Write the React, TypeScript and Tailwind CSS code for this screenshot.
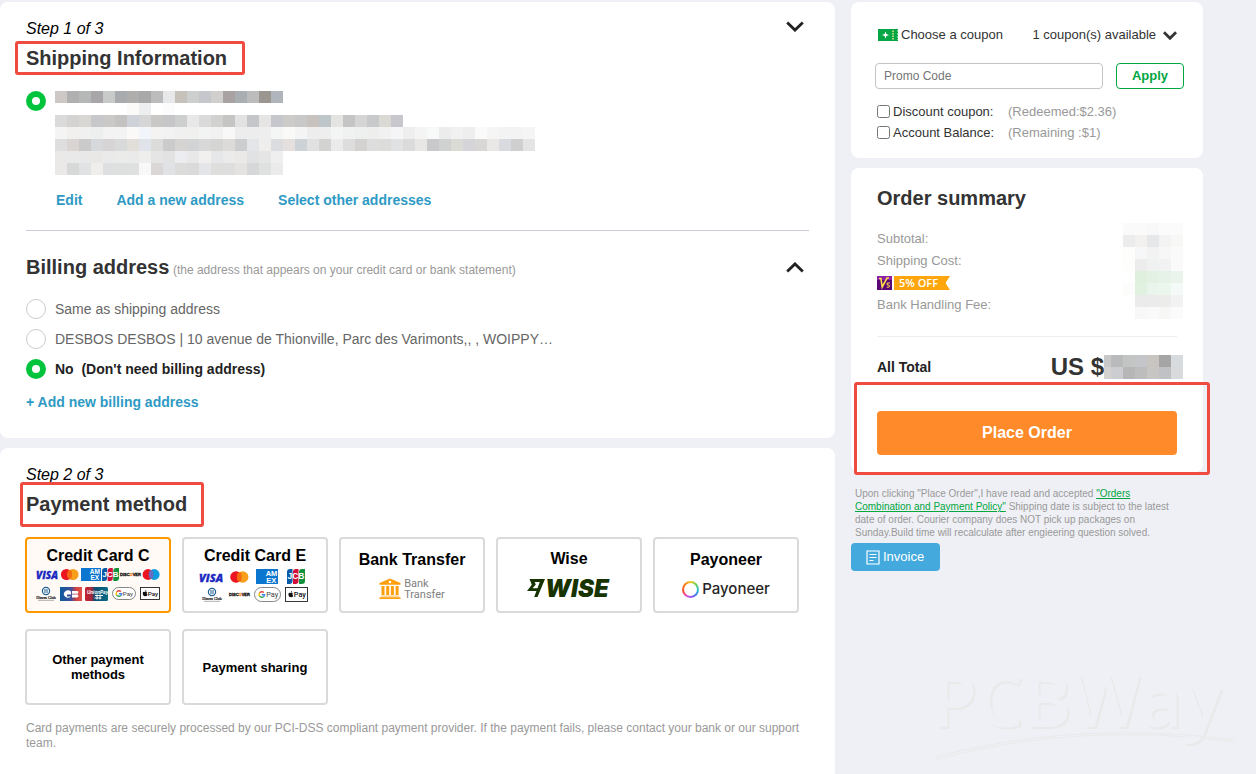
import React, { useState } from 'react';

const ADDRESS_CELLS = [
  'cdc8c6 b0b0b0 b5b8b7 a8a6a9 c7cac9 a8abae afaeac a8a8a8 bcbcbc e6e8ea c6c2bb cdcfce c6c7cd d0cfce a8a3a2 a8aeb2 bcbcbc 9c9691 b0b4bb',
  '- - - - - - fcfaf8 eceef0 - fcfcfc',
  'dadada d5d3d1 d8d7d4 c6c8cb cac9c8 c5c3c1 cfd2d9 d6d6d6 c9c8c7 c6c6c9 cdcfce e8e8e8 dadada d1d1d0 c5c5c3 e2e2e2 c4c6c9 e7e5e4 c6c7cd cccbca c8c8c8 c8c2be bfc6ca e4e4e2 c5c5c5 d5d5d5 c8c9ca dad9d4 c7c7cd',
  'f4f4f4 f2f0ee f0f0f0 ecefee f3f3f3 f3f3f3 fbf9f7 f2f5f9 f4f3f2 f2f2f2 f0f0f0 f0f0ef f2f4f3 f1f1f1 f8f8f8 ededed ededed eeeeee f4f6f5 f9f9f7 f4f4f4 ededed eeeeee f3f5f4 f0f1f1 edf0ef eeeeec f1f1f1 f5f5f7 eeeeee f4f4f4 f8faf9 ececec f1f1f1 eeeeee fafafa f5f5f5 f3f3f3 f3f3f3 f5f5f5',
  'dedede dad5d2 cacaca d5d9dc d6d4d5 d8d9db e2deda e0e4ea dcdcda cbcbcb d6d4d2 d2d3d5 d8d8d8 d5d5d4 dcdbd9 cccdcf e4e5e8 efeeec dbdcdf e5e0dd cdd2d6 e1e1e1 d3d3d1 ebebeb dddddd d3d2d0 dddddd dcdcda e1e2e4 dbdbdb e8e7e6 c9c9cc d0d2d1 dbdbd5 d5d5d9 d8d7d5 e9e8e6 d9dae0 cfcfcf e4e4e4',
  'eae9e8 e9e9e9 e8e8e8 eae8e6 eaeaea ebebea eaeaea eeeeec e5e5e5 e2e2e2 ebedf0 e8e8e8 f1f0ee e6e7e9 ebebeb eae9e7 e1e2e4 e5e5e6 efefef',
  'eae9e7 d7d9d8 e0e2e3 efeeeb dedfe1 dee0e0 dfe1e1 f8f8f8 dbd7d6 e1e2e6 dcdcda dadada e4e5e8 dededd dededf e4e3e1 d6d7d9 dfe1e0 ebebeb',
];

const AMOUNT_CELLS = [
  'fafafa fafafa f8f8f9 fbfbfb fbfbfb',
  'ececec f2f1ef e6e7e9 f3f3f3 f7f7f5',
  'fdfdfb f6f7f9 f2f2f3 f7f7f7 fafafa',
  'fdfdfb ececed f0f1f1 f2f2f2 fafafa',
  '- dff0de e2f1e3 e6f2e7 eaf4ec',
  'fcfcfa e1f1e0 e8f4ec ebf6ed f4faf7',
  '- ebebec ebebec ececeb f2f2f3',
  '- f8f8f8 fafafa f7f7f5 fbfbfb',
];

const TOTAL_CELLS = [
  'c8c8c8 b9babc c3c5c4 c3c5c8 c8c4c0 a5a5a5 d7dbde',
  'd3d2d1 cccdd0 b6b6b6 bdbdbd c7c6c4 c0c1c4 d9dadc',
];

interface MosaicProps {
  rows: string[];
  columns: number;
}

const Mosaic: React.FC<MosaicProps> = ({ rows, columns }) => (
  <svg
    width={columns * 12}
    height={rows.length * 12}
    shapeRendering="crispEdges"
    className="shrink-0"
    aria-hidden="true"
  >
    {rows.map((row, y) =>
      row.split(' ').map((color, x) =>
        color === '-' ? null : (
          <rect key={`${x}-${y}`} x={x * 12} y={y * 12} width="12" height="12" fill={`#${color}`} />
        )
      )
    )}
  </svg>
);

const Chevron: React.FC<{ up?: boolean; small?: boolean }> = ({ up, small }) => (
  <svg
    width={small ? 14 : 18}
    height={small ? 9 : 11}
    viewBox="0 0 18 11"
    fill="none"
    stroke={small ? '#333' : '#222'}
    strokeWidth={small ? 3.6 : 2.8}
    aria-hidden="true"
  >
    <path d={up ? 'M1.2 9.6 9 1.9l7.8 7.7' : 'M1.2 1.4 9 9.1l7.8-7.7'} />
  </svg>
);

/* Payment brand marks */

const Visa = ({ x, y, size }: { x: number; y: number; size: number }) => (
  <text
    x={x}
    y={y}
    fontSize={size}
    fontFamily="Open Sans, sans-serif"
    fontWeight="800"
    fontStyle="italic"
    fill="#1a28c0"
    stroke="#1a28c0"
    strokeWidth="0.3"
  >
    VISA
  </text>
);

const Circles = ({ x, y, r, right, middle }: { x: number; y: number; r: number; right: string; middle: string }) => (
  <g>
    <circle cx={x} cy={y} r={r} fill="#eb1420" />
    <circle cx={x + r * 1.15} cy={y} r={r} fill={right} />
    <ellipse cx={x + r * 0.575} cy={y} rx={r * 0.42} ry={r * 0.8} fill={middle} />
  </g>
);

const Amex = ({ x, y, w, h }: { x: number; y: number; w: number; h: number }) => (
  <g fontFamily="Liberation Sans, sans-serif" fontWeight="700" fontSize={h / 2} fill="#fff">
    <rect x={x} y={y} width={w} height={h} fill="#0b76d0" />
    <text x={x + w * 0.44} y={y + h * 0.47}>AM</text>
    <text x={x + w * 0.47} y={y + h * 0.9}>EX</text>
  </g>
);

const Jcb = ({ x, y, w, h }: { x: number; y: number; w: number; h: number }) => (
  <g>
    <path d={`M${x} ${y + 3}q0-3 3-3h${w / 3 - 3.5}v${h - 3}q0 3-3 3h-${w / 3 - 3.5}z`} fill="#0a5aa8" />
    <path d={`M${x + w / 3} ${y + 3}q0-3 3-3h${w / 3 - 3.5}v${h - 3}q0 3-3 3h-${w / 3 - 3.5}z`} fill="#d0103a" />
    <path d={`M${x + (w * 2) / 3} ${y + 3}q0-3 3-3h${w / 3 - 3}v${h - 3}q0 3-3 3h-${w / 3 - 3}z`} fill="#12903c" />
    <text
      x={x + w / 2}
      y={y + h * 0.68}
      textAnchor="middle"
      fontFamily="Liberation Sans, sans-serif"
      fontWeight="700"
      fontSize={w * 0.47}
      fill="#fff"
    >
      JCB
    </text>
  </g>
);

const Discover = ({ x, y }: { x: number; y: number }) => (
  <text x={x} y={y} fontFamily="Liberation Sans, sans-serif" fontWeight="700" fontSize="4" fill="#111" stroke="#111" strokeWidth="0.3">
    DISC
    <tspan fill="#f47a20" stroke="#f47a20">O</tspan>
    VER
  </text>
);

const Diners = ({ x, y }: { x: number; y: number }) => (
  <g>
    <circle cx={x + 9} cy={y + 4} r="3.6" fill="#fff" stroke="#1b5f92" strokeWidth="1.2" />
    <path d={`M${x + 8} ${y + 2}v4M${x + 10} ${y + 2}v4`} stroke="#1b5f92" strokeWidth="1" />
    <text x={x + 9} y={y + 12} textAnchor="middle" fontFamily="Liberation Serif, serif" fontSize="4" fill="#111" stroke="#111" strokeWidth="0.2">
      Diners Club
    </text>
    <path d={`M${x + 1} ${y + 13.3}h16`} stroke="#777" strokeWidth="0.6" />
  </g>
);

const GPay = ({ x, y, w, h }: { x: number; y: number; w: number; h: number }) => {
  const cx = x + w * 0.28;
  const cy = y + h / 2;
  return (
    <g fill="none" strokeWidth="1.4">
      <rect x={x} y={y} width={w} height={h} rx={h / 2} fill="#fff" stroke="#777" strokeWidth="0.9" />
      <path d={`M${cx + 2} ${cy - 2}a2.8 2.8 0 0 0-4.2.4`} stroke="#ea4335" />
      <path d={`M${cx - 2.2} ${cy - 1.6}a2.8 2.8 0 0 0 0 3.2`} stroke="#fbbc04" />
      <path d={`M${cx - 2.2} ${cy + 1.6}a2.8 2.8 0 0 0 4.2.4`} stroke="#34a853" />
      <path d={`M${cx} ${cy + 0.2}h2.8a2.8 2.8 0 0 1-.8 1.8`} stroke="#4285f4" />
      <text x={x + w * 0.45} y={cy + h * 0.18} fontFamily="Roboto, sans-serif" fontSize={h * 0.52} fill="#444" stroke="none">
        Pay
      </text>
    </g>
  );
};

const ApplePay = ({ x, y, w, h }: { x: number; y: number; w: number; h: number }) => {
  const ax = x + w * 0.24;
  const cy = y + h / 2;
  return (
    <g>
      <rect x={x} y={y} width={w} height={h} fill="#fff" stroke="#222" strokeWidth="0.9" />
      <path
        d={`M${ax + 2} ${cy - 1.4}q-1-.9-2-.2q-2-.7-2.4 1.2q0 2.2 1.5 3.2l1-.3l1 .3q.9-.4 1.3-1.6q-1.5-1.2-.4-2.6zM${ax} ${cy - 2}q0-1.4 1.3-1.8q0 1.4-1.3 1.8z`}
        fill="#111"
      />
      <text x={x + w * 0.38} y={cy + h * 0.17} fontFamily="Roboto, sans-serif" fontWeight="500" fontSize={h * 0.52} fill="#111">
        Pay
      </text>
    </g>
  );
};

const CardLogosC = () => (
  <svg width="128" height="38" viewBox="0 0 128 38" aria-hidden="true">
    <defs>
      <linearGradient id="cb" x1="0" x2="1">
        <stop offset="0" stopColor="#0a5a9c" />
        <stop offset="0.5" stopColor="#3d4f9a" />
        <stop offset="0.75" stopColor="#d8403c" />
        <stop offset="1" stopColor="#e0564e" />
      </linearGradient>
      <linearGradient id="up" x1="0" x2="1">
        <stop offset="0" stopColor="#c82430" />
        <stop offset="0.3" stopColor="#a02840" />
        <stop offset="0.42" stopColor="#0d4d72" />
        <stop offset="1" stopColor="#0a6c86" />
      </linearGradient>
    </defs>
    <Visa x={2} y={12.5} size={10} />
    <Circles x={32.5} y={8.5} r={5.6} right="#f79e1b" middle="#f56a10" />
    <Amex x={47} y={2} w={20} h={13} />
    <Jcb x={68} y={2} w={17} h={13} />
    <Discover x={86} y={10.2} />
    <Circles x={114} y={8.5} r={5.4} right="#0f9be0" middle="#6c6bbd" />
    <Diners x={3} y={21} />
    <rect x="26" y="21" width="22" height="14" fill="url(#cb)" />
    <path d="M37 25.5a4.2 3.6 0 1 0 0 5h-4v-2h4zM38 25h5a1.4 1.4 0 0 1 0 2.8h-5zM38 28.6h5a1.4 1.4 0 0 1 0 2.8h-5z" fill="#fff" />
    <rect x="51" y="21" width="23" height="14" rx="1.5" fill="url(#up)" />
    <text x="53" y="27.5" fontFamily="Liberation Sans, sans-serif" fontStyle="italic" fontWeight="700" fontSize="4.6" fill="#fff">
      UnionPay
    </text>
    <path d="M61 29.5h8M60.5 32h7M63 28.5v5M66 28.5v5" stroke="#fff" strokeWidth="1" />
    <GPay x={78.5} y={21.5} w={23} h={12} />
    <ApplePay x={106.5} y={21.5} w={19} h={12} />
  </svg>
);

const CardLogosE = () => (
  <svg width="128" height="38" viewBox="0 0 128 38" aria-hidden="true">
    <Visa x={8} y={15.5} size={11} />
    <Circles x={45} y={11} r={5.8} right="#f79e1b" middle="#f56a10" />
    <Amex x={65} y={3} w={22} h={15} />
    <Jcb x={96} y={3} w={18} h={15} />
    <Diners x={12} y={22} />
    <Discover x={38} y={30} />
    <GPay x={63.5} y={21.5} w={26} h={14} />
    <ApplePay x={94.5} y={21.5} w={22} h={14} />
  </svg>
);

const BankLogo = () => (
  <span className="flex items-center gap-[3px]">
    <svg width="22" height="22" viewBox="0 0 22 22" fill="#ff9f0e" aria-hidden="true">
      <path d="M11 0.5 21.500 5v1.8H0.500V5z" />
      <circle cx="11" cy="4" r="1.3" fill="#fff" />
      <path d="M2.500 8h3v9h-3zM7.200 8h3v9h-3zM11.900 8h3v9h-3zM16.600 8h3v9h-3z" />
      <path d="M2 17.500h18v1.200H2z" opacity="0.6" />
      <path d="M0.500 19.200h21V21h-21z" />
    </svg>
    <span className="text-left font-[Roboto,sans-serif] text-[11px] leading-[11px] text-[#808080]">
      <span className="block">Bank</span>
      <span className="block">Transfer</span>
    </span>
  </span>
);

const WiseLogo = () => (
  <svg width="84" height="24" viewBox="0 0 84 24" fill="#163300" className="overflow-visible" aria-hidden="true">
    <path d="M2.500 2H18L10.500 20H7.200L12.800 5H7.600L8.800 7.600 5.500 11.200H10.500L9.400 14H0L4.800 7.800z" />
    <text x="18" y="20" fontFamily="Inter, sans-serif" fontWeight="900" fontStyle="italic" fontSize="24">
      WISE
    </text>
  </svg>
);

const PayoneerLogo = () => (
  <span className="flex items-center gap-[3px]">
    <span className="size-[17px] rounded-full bg-[conic-gradient(#f5c81e,#5fd35a,#25b8f0,#6b5cf0,#d94fe0,#ff4a3a,#ff7a1a,#f5c81e)] p-[2px]">
      <span className="block size-full rounded-full bg-white" />
    </span>
    <span className="font-[Inter,sans-serif] text-[15px] leading-[22px] font-medium text-[#252525]">Payoneer</span>
  </span>
);

interface PaymentOption {
  id: string;
  title: string;
  logo?: React.ReactNode;
  gap?: boolean;
}

const OPTIONS: PaymentOption[] = [
  { id: 'card-c', title: 'Credit Card C', logo: <CardLogosC /> },
  { id: 'card-e', title: 'Credit Card E', logo: <CardLogosE /> },
  { id: 'bank', title: 'Bank Transfer', logo: <BankLogo />, gap: true },
  { id: 'wise', title: 'Wise', logo: <WiseLogo />, gap: true },
  { id: 'payoneer', title: 'Payoneer', logo: <PayoneerLogo />, gap: true },
  { id: 'other', title: 'Other payment methods' },
  { id: 'sharing', title: 'Payment sharing' },
];

const radioClass =
  'size-5 shrink-0 appearance-none rounded-full border border-[#ccc] bg-white checked:border-[6px] checked:border-[#00c43c]';
const linkClass = 'text-sm leading-5 font-bold text-[#2e9ac4]';
const markClass = 'pointer-events-none absolute rounded-[3px] border-[3px] border-[#f04b41]';

const ShippingCard = () => {
  const [billing, setBilling] = useState('none');
  const choices = [
    { id: 'same', label: 'Same as shipping address' },
    { id: 'desbos', label: 'DESBOS DESBOS | 10 avenue de Thionville, Parc des Varimonts,, , WOIPPY…' },
    { id: 'none', label: "No\u00a0 (Don't need billing address)" },
  ];

  return (
    <section className="rounded-lg bg-white px-[26px] pt-[17px] pb-[26px]">
      <div className="flex items-start justify-between">
        <p className="text-base leading-5 text-black italic">Step 1 of 3</p>
        <button type="button" aria-label="Collapse shipping information" className="mt-0.5 mr-[5px]">
          <Chevron />
        </button>
      </div>
      <h2 className="relative mt-[7px] w-fit text-xl leading-6 font-bold">
        Shipping Information
        <span className={`${markClass} -top-[5px] -right-[18px] -bottom-[5px] -left-[11px]`} />
      </h2>
      <div className="mt-[21px] flex gap-[9px]">
        <input type="radio" name="shipping" aria-label="Saved address" defaultChecked className={radioClass} />
        <Mosaic rows={ADDRESS_CELLS} columns={40} />
      </div>
      <div className="mt-[15px] flex gap-[34px] pl-[30px]">
        <a href="#edit" className={linkClass}>Edit</a>
        <a href="#add-address" className={linkClass}>Add a new address</a>
        <a href="#addresses" className={linkClass}>Select other addresses</a>
      </div>
      <hr className="mt-5 border-[#c9ced8]" />

      <div className="mt-6 flex items-center justify-between">
        <h2 className="text-xl leading-6 font-bold">
          Billing address{' '}
          <small className="-ml-0.5 text-xs font-normal text-[#999]">
            (the address that appears on your credit card or bank statement)
          </small>
        </h2>
        <button type="button" aria-label="Collapse billing address" className="mr-[5px]">
          <Chevron up />
        </button>
      </div>
      <div className="mt-5 flex flex-col gap-2.5">
        {choices.map(choice => (
          <label key={choice.id} className="flex items-center gap-[9px] text-sm leading-5 text-[#666] has-checked:font-bold has-checked:text-[#222]">
            <input
              type="radio"
              name="billing"
              checked={billing === choice.id}
              onChange={() => setBilling(choice.id)}
              className={radioClass}
            />
            {choice.label}
          </label>
        ))}
      </div>
      <div className="mt-[13px] flex">
        <a href="#add-billing" className={linkClass}>+ Add new billing address</a>
      </div>
    </section>
  );
};

const PaymentCard = () => {
  const [selected, setSelected] = useState('card-c');

  return (
    <section className="mt-2.5 flex-1 rounded-t-lg bg-white px-[26px] pt-[17px] pb-6">
      <p className="text-base leading-5 text-black italic">Step 2 of 3</p>
      <h2 className="relative mt-[7px] w-fit text-xl leading-6 font-bold">
        Payment method
        <span className={`${markClass} -top-[10px] -right-[17px] -bottom-[11px] -left-[6px]`} />
      </h2>
      <div className="mt-[21px] -ml-px flex flex-wrap gap-x-[11px] gap-y-4">
        {OPTIONS.map(option => (
          <button
            key={option.id}
            type="button"
            aria-pressed={selected === option.id}
            onClick={() => setSelected(option.id)}
            className={`flex h-[76px] w-[146px] flex-col items-center justify-center rounded border-2 ${
              selected === option.id ? 'border-[#ff9900] bg-[#fffaf5]' : 'border-[#dadada] bg-white'
            } ${option.gap ? 'gap-2' : ''}`}
          >
            <span className={`font-bold text-black ${option.logo ? 'text-base leading-5' : 'px-4 text-[13px] leading-[15px]'}`}>
              {option.title}
            </span>
            {option.logo}
          </button>
        ))}
      </div>
      <p className="mt-4 text-xs leading-[15px] text-[#999]">
        Card payments are securely processed by our PCI-DSS compliant payment provider. If the payment fails, please contact your
        bank or our support team.
      </p>
    </section>
  );
};

const CouponCard = () => (
  <section className="rounded-lg bg-white pt-[23px] pr-[19px] pb-[15px] pl-6 text-[13px]">
    <div className="flex items-center pr-[7px] pl-[3px] leading-5">
      <svg width="20" height="12" viewBox="0 0 20 12" className="mr-[3px]" aria-hidden="true">
        <path d="M0 0h20v12H0z" fill="#06a647" />
        <path d="M7.500 2.500 8.400 5.100 11 6 8.400 6.900 7.500 9.500 6.600 6.900 4 6l2.600-.9z" fill="#fff" />
        <path d="M15 1.500v9.500" stroke="#ffe98a" strokeWidth="1.400" strokeDasharray="1.500 1" />
        <path d="M19.500 1v10" stroke="#7fd39f" strokeWidth="1" strokeDasharray="2 1" />
      </svg>
      <span>Choose a coupon</span>
      <button type="button" className="ml-auto flex items-center gap-[7px]">
        <span>1 coupon(s) available</span>
        <Chevron small />
      </button>
    </div>
    <div className="mt-[18px] flex gap-[13px]">
      <input
        type="text"
        aria-label="Promo Code"
        placeholder="Promo Code"
        className="h-[26px] min-w-0 flex-1 rounded border border-[#c4c4c4] px-2 text-xs placeholder:text-[#757575]"
      />
      <button type="button" className="h-[26px] w-[68px] rounded border border-[#00a63f] font-bold text-[#00a63f]">
        Apply
      </button>
    </div>
    <div className="mt-3 grid grid-cols-[131px_1fr] pl-0.5 leading-[21px]">
      <label className="flex items-center gap-[3px]">
        <input type="checkbox" className="size-[13px]" />
        Discount coupon:
      </label>
      <span className="text-[#999]">(Redeemed:$2.36)</span>
      <label className="flex items-center gap-[3px]">
        <input type="checkbox" className="size-[13px]" />
        Account Balance:
      </label>
      <span className="text-[#999]">(Remaining :$1)</span>
    </div>
  </section>
);

const SummaryCard = () => (
  <section className="mt-2.5 rounded-lg bg-white pt-[18px] pr-5 pb-[17px] pl-[26px]">
    <h2 className="text-xl leading-6 font-bold">Order summary</h2>
    <div className="mt-[13px] flex justify-between">
      <div className="pt-[5px] pb-[3px] text-[13px] leading-[22px] text-[#999]">
        <p>Subtotal:</p>
        <p>Shipping Cost:</p>
        <p className="flex h-[22px] items-center gap-0.5">
          <svg width="15" height="14" viewBox="0 0 15 14" aria-hidden="true">
            <path d="M0 0h15v14H0z" fill="#5b0675" />
            <path d="M0 0h15v4H0z" fill="#8a1fa8" />
            <path d="M2 2.500h2.800M4 3l1.200 8L10 2h2" fill="none" stroke="#ffe14a" strokeWidth="1.600" />
            <path d="M13 7h-2.800v2q2.400-.4 2.400 1.200t-2.800 1" fill="none" stroke="#ffe14a" />
          </svg>
          <span className="flex h-[14px] w-14 items-center bg-[#ffa60d] pl-[5px] font-['Open_Sans',sans-serif] text-[11px] font-semibold text-white [clip-path:polygon(0_0,100%_0,92%_50%,100%_100%,0_100%)]">
            5% OFF
          </span>
        </p>
        <p>Bank Handling Fee:</p>
      </div>
      <Mosaic rows={AMOUNT_CELLS} columns={5} />
    </div>
    <hr className="mt-[17px] mr-1.5 border-[#eee]" />
    <div className="mt-[18px] flex h-6 items-center justify-between">
      <span className="text-sm font-bold text-[#222]">All Total</span>
      <span className="flex items-center text-2xl leading-6 font-bold">
        US $
        <svg width="79" height="24" viewBox="5 0 79 24" shapeRendering="crispEdges" aria-hidden="true">
          {TOTAL_CELLS.map((row, y) =>
            row.split(' ').map((color, x) => (
              <rect key={`${x}-${y}`} x={x === 0 ? 5 : x * 12} y={y * 12} width={x === 0 ? 7 : 12} height="12" fill={`#${color}`} />
            ))
          )}
        </svg>
      </span>
    </div>
    <div className="relative mt-8 mr-1.5">
      <button type="button" className="h-11 w-full rounded bg-[#ff8a29] text-base font-bold text-white">
        Place Order
      </button>
      <span className={`${markClass} -top-[29px] -right-[33px] -bottom-5 -left-[23px]`} />
    </div>
  </section>
);

const Watermark = () => (
  <svg
    width="324"
    height="108"
    viewBox="0 0 324 108"
    className="pointer-events-none absolute right-0 bottom-0 overflow-visible drop-shadow-[2px_2px_0_#e9e9ea]"
    aria-hidden="true"
  >
    <text x="0" y="60" fontFamily="Open Sans, sans-serif" fontWeight="600" fontSize="73" fill="#eff0f5">
      PCBWay
    </text>
    <path d="M2 90Q150 52 301 73" fill="none" stroke="#e9e9ea" strokeWidth="1" />
  </svg>
);

export default function App() {
  return (
    <div className="relative flex min-h-screen gap-4 bg-[#eff0f5] pt-0.5 pr-[53px] font-['Liberation_Sans',Arial,sans-serif] text-[#333]">
      <main className="flex min-w-0 flex-1 flex-col">
        <ShippingCard />
        <PaymentCard />
      </main>
      <aside className="relative z-10 w-[352px] shrink-0">
        <CouponCard />
        <SummaryCard />
        <p className="mt-[15px] pr-4 pl-1 text-[10px] leading-[13px] text-[#999]">
          Upon clicking "Place Order",I have read and accepted{' '}
          <a href="#policy" className="text-[#00a63f] underline">"Orders Combination and Payment Policy"</a> Shipping date is
          subject to the latest date of order. Courier company does NOT pick up packages on Sunday.Build time will recalculate
          after engieering question solved.
        </p>
        <button type="button" className="mt-1 flex h-7 w-[89px] items-center gap-[3px] rounded bg-[#44aade] pl-[15px] text-[13px] text-white">
          <svg width="14" height="15" viewBox="0 0 14 15" fill="none" stroke="#fff" aria-hidden="true">
            <path d="M1 1h12v13H1zM3.500 4.500h7M3.500 7.500h7M3.500 10.500h4" strokeWidth="1.200" />
          </svg>
          Invoice
        </button>
      </aside>
      <Watermark />
    </div>
  );
}
